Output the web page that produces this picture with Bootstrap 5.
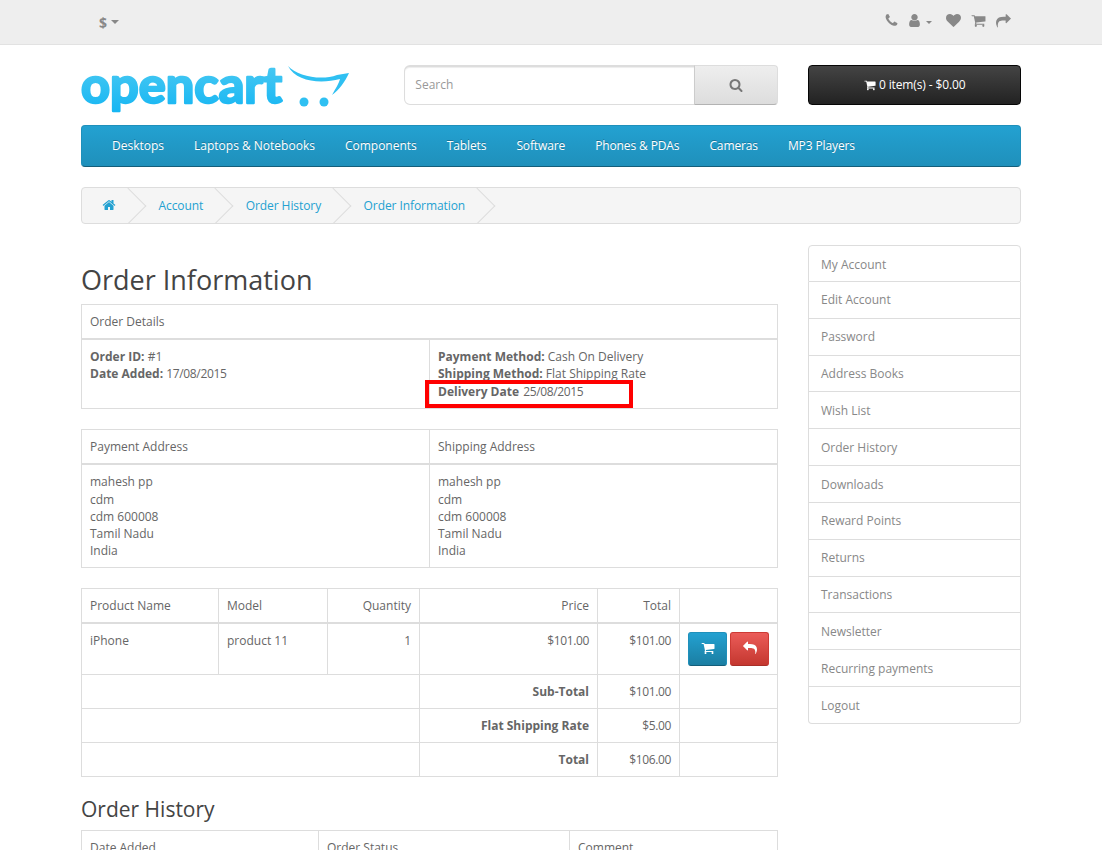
<!DOCTYPE html>
<html lang="en">
<head>
  <meta charset="UTF-8">
  <meta name="viewport" content="width=device-width, initial-scale=1">
  <title>Order Information</title>
  <link href="https://cdn.jsdelivr.net/npm/bootstrap@5.3.3/dist/css/bootstrap.min.css" rel="stylesheet">
  <style>
    html { overflow: hidden; }
    body {
      font-family: "Open Sans", "Liberation Sans", sans-serif;
      font-size: 12px;
      line-height: 1.42857;
      color: #666;
      background: #fff;
    }
    a { color: #23a1d1; text-decoration: none; }
    .container { max-width: 970px; --bs-gutter-x: 30px; }
    .row { --bs-gutter-x: 30px; --bs-gutter-y: 0; }
    .col-9.main-col { width: 727px; }
    .col-3.side-col { width: 243px; }
    .ico { width: 1em; height: 1em; fill: currentColor; display: inline-block; vertical-align: -0.125em; }
    .nums { letter-spacing: -.35px; }

    .top-strip {
      height: 45px;
      background: #eee;
      border-bottom: 1px solid #e2e2e2;
      margin-bottom: 20px;
      color: #888;
    }
    .currency { font-size: 14px; font-weight: 700; color: #888; margin: 13px 0 0 18px; line-height: 20px; }
    .top-links { gap: 10px; font-size: 15px; color: #888; margin: 10px 10px 0 0; line-height: 20px; }
    .top-links .dropdown-toggle { color: #888; margin: 0 4px 0 -2px; }
    .top-links .dropdown-toggle::after { border-top-width: 3px; border-left-width: 3px; border-right-width: 3px; margin-left: 4px; vertical-align: 2px; }

    .logo-svg { display: block; width: 270px; height: 50px; margin-top: 1px; }
    .search-box { height: 40px; }
    .search-box .form-control {
      height: 40px;
      font-size: 12px;
      color: #666;
      border: 1px solid #ddd;
      border-top-width: 2px;
      border-radius: 6px 0 0 6px;
      box-shadow: inset 0 1px 1px rgba(0, 0, 0, .075);
      padding: 8px 10px 11px;
    }
    .search-box .form-control::placeholder { color: #999; }
    .search-btn {
      width: 84px;
      height: 40px;
      padding: 0;
      font-size: 14px;
      color: #777;
      background: linear-gradient(to bottom, #eee, #ddd);
      border: 1px solid #ddd;
      border-bottom-color: #b3b3b3;
      border-left-color: #ccc;
      border-radius: 0 4px 4px 0;
    }
    .cart-btn {
      height: 40px;
      padding: 0;
      font-size: 12px;
      letter-spacing: -.12px;
      color: #fff;
      background: linear-gradient(to bottom, #444, #222);
      border: 1px solid #060606;
      border-radius: 4px;
    }

    .main-menu {
      background: linear-gradient(to bottom, #23a1d1, #1f90bb);
      border: 1px solid #1f90bb;
      border-bottom-color: #145e7a;
      border-radius: 4px;
      min-height: 42px;
      margin: 9px 0 20px;
      padding: 0 15px;
    }
    .main-menu .nav-link {
      color: #fff;
      font-size: 12px;
      padding: 10px 15px;
      text-shadow: 0 -1px 0 rgba(0, 0, 0, .25);
      line-height: 19px;
    }
    .main-menu .nav-item:nth-child(n+4) .nav-link { letter-spacing: -.12px; }

    .breadcrumb {
      background: #f5f5f5;
      border: 1px solid #ddd;
      border-radius: 4px;
      padding: 8px 0;
      margin: 0 0 21px;
      gap: 2.5px;
      overflow: hidden;
      height: 37px;
    }
    .breadcrumb-item { position: relative; padding: 0 20px; line-height: 20px; letter-spacing: -.08px; }
    .breadcrumb-item + .breadcrumb-item { padding-left: 20px; }
    .breadcrumb-item + .breadcrumb-item::before { display: none; }
    .breadcrumb-item::after {
      content: "";
      position: absolute;
      top: -3px;
      right: -5px;
      width: 26px;
      height: 26px;
      border-right: 1px solid #ddd;
      border-bottom: 1px solid #ddd;
      transform: rotate(-45deg);
    }
    .breadcrumb-item a { position: relative; z-index: 1; }
    .breadcrumb-item .ico { font-size: 14px; }

    h1.page-title { font-size: 27px; line-height: 1.1; font-weight: 400; color: #444; margin: 20px 0 9px; }
    h3.sub-title { font-size: 21px; line-height: 1.1; font-weight: 400; color: #444; margin: 21px 0 9px; }

    .oc-table {
      --bs-table-color: #666;
      --bs-table-border-color: #ddd;
      --bs-table-bg: transparent;
      table-layout: fixed;
      margin-bottom: 20px;
      font-size: 12px;
      color: #666;
    }
    .oc-table > :not(caption) > * > * { padding: 8px; line-height: 1.42857; vertical-align: top; box-shadow: none; color: #666; }
    .oc-table > thead > tr > * { font-weight: 400; border-bottom-width: 2px; border-bottom-color: #ddd; }
    .oc-table > :not(:first-child) { border-top: 0; }
    .oc-table > tbody > tr.detail-row > td { line-height: 17.5px; }
    .oc-table > tbody > tr.sum-row > td { line-height: 17px; }
    .cell-rel { position: relative; }
    .mark-box {
      position: absolute;
      left: -5px;
      top: 40px;
      width: 208px;
      height: 28px;
      border: 4px solid #f00;
      pointer-events: none;
    }
    .date-val { margin-left: 1px; }
    .w-name { width: 137px; }
    .w-model { width: 109px; }
    .w-qty { width: 92px; }
    .w-price { width: 178px; }
    .w-total { width: 82px; }
    .h-date { width: 237px; }
    .h-status { width: 251px; }

    .act-btn {
      width: 39px;
      height: 34px;
      padding: 0;
      font-size: 12px;
      color: #fff;
      border-radius: 3px;
      text-shadow: 0 -1px 0 rgba(0, 0, 0, .25);
    }
    .act-blue { background: linear-gradient(to bottom, #23a1d1, #1b7ea2); border: 1px solid #1f90bb; border-bottom-color: #145e7a; }
    .act-red { background: linear-gradient(to bottom, #eb5c59, #c4372f); border: 1px solid #cd3a35; border-bottom-color: #a82f28; margin-left: 3px; }
    .act-btn .ico { font-size: 14px; }

    .side-list { --bs-list-group-border-color: #ddd; --bs-list-group-border-radius: 4px; }
    .side-list .list-group-item { color: #888; font-size: 12px; padding: 9.5px 12px; line-height: 1.42857; border-color: #ddd; height: 36.85px; }
    .side-list .list-group-item + .list-group-item { border-top-width: 0; }
  </style>
</head>
<body>

  <svg width="0" height="0" class="position-absolute">
    <symbol id="i-phone" viewBox="0 0 1792 1792"><path d="M1600 1240q0 27-10 70.500t-21 68.500q-21 50-122 106-94 51-186 51-27 0-53-3.500t-57.500-12.500-47-14.500-55.500-20.500-49-18q-98-35-175-83-127-79-264-216t-216-264q-48-77-83-175-3-9-18-49t-20.500-55.500-14.500-47-12.500-57.500-3.500-53q0-92 51-186 56-101 106-122 25-11 68.500-21t70.500-10q14 0 21 3 18 6 53 76 11 19 30 54t35 63.500 31 53.500q3 4 17.500 25t21.500 35.500 7 28.500q0 20-28.500 50t-62 55-62 53-28.500 46q0 9 5 22.500t8.500 20.500 14 24 11.500 19q76 137 174 235t235 174q2 1 19 11.500t24 14 20.500 8.500 22.500 5q18 0 46-28.500t53-62 55-62 50-28.500q14 0 28.500 7t35.500 21.500 25 17.500q25 15 53.500 31t63.500 35 54 30q70 35 76 53 3 7 3 21z"/></symbol>
    <symbol id="i-user" viewBox="0 0 1792 1792"><path d="M1536 1399q0 109-62.500 187t-150.500 78h-854q-88 0-150.500-78t-62.500-187q0-85 8.500-160.500t31.500-152 58.500-131 94-89 134.500-34.500q131 128 313 128t313-128q76 0 134.500 34.500t94 89 58.500 131 31.500 152 8.500 160.500zm-256-887q0 159-112.500 271.500t-271.500 112.500-271.500-112.500-112.500-271.500 112.500-271.500 271.500-112.500 271.500 112.500 112.500 271.500z"/></symbol>
    <symbol id="i-heart" viewBox="0 0 1792 1792"><path d="M896 1664q-26 0-44-18l-624-602q-10-8-27.500-26t-55.500-65.500-68-97.500-53.500-121-23.500-138q0-220 127-344t351-124q62 0 126.500 21.500t120 58 95.500 68.500 76 68q36-36 76-68t95.500-68.500 120-58 126.500-21.500q224 0 351 124t127 344q0 221-229 450l-623 600q-18 18-44 18z"/></symbol>
    <symbol id="i-cart" viewBox="0 0 1792 1792"><path d="M704 1536q0 52-38 90t-90 38-90-38-38-90 38-90 90-38 90 38 38 90zm896 0q0 52-38 90t-90 38-90-38-38-90 38-90 90-38 90 38 38 90zm128-1088v512q0 24-16.500 42.500t-40.500 21.500l-1044 122q13 60 13 70 0 16-24 64h920q26 0 45 19t19 45-19 45-45 19h-1024q-26 0-45-19t-19-45q0-11 8-31.500t16-36 21.500-40 15.500-29.500l-177-823h-204q-26 0-45-19t-19-45 19-45 45-19h256q16 0 28.500 6.500t19.500 15.500 13 24.500 8 26 5.500 29.500 4.500 26h1201q26 0 45 19t19 45z"/></symbol>
    <symbol id="i-share" viewBox="0 0 1792 1792"><path d="M1792 640q0 26-19 45l-512 512q-19 19-45 19t-45-19-19-45v-256h-224q-98 0-175.500 6t-154 21.500-133 42.500-105.500 69.500-79.500 112.500-48 162-17 219q0 49 5 109 1 12 4 27.500t3 22q0 17-10 29t-28 12q-19 0-33-20-8-10-15-24t-16-32.500-12-26.500q-110-247-110-419 0-200 53-345 162-403 875-403h224v-256q0-26 19-45t45-19 45 19l512 512q19 19 19 45z"/></symbol>
    <symbol id="i-reply" viewBox="0 0 1792 1792"><path d="M1792 1120q0 166-127 451-3 7-10.500 24t-13.500 30-13 22q-12 17-28 17-15 0-23.500-10t-8.500-25q0-9 2.500-26.500t2.500-23.500q5-68 5-123 0-101-17.500-181t-48.500-138.500-80-101-105.500-69.500-133-42.500-154-21.500-175.500-6h-224v256q0 26-19 45t-45 19-45-19l-512-512q-19-19-19-45t19-45l512-512q19-19 45-19t45 19 19 45v256h224q713 0 875 403 53 134 53 333z"/></symbol>
    <symbol id="i-search" viewBox="0 0 1792 1792"><path d="M1216 832q0-185-131.500-316.500t-316.500-131.500-316.500 131.500-131.500 316.500 131.500 316.500 316.500 131.500 316.500-131.500 131.500-316.500zm512 832q0 52-38 90t-90 38q-54 0-90-38l-343-342q-179 124-399 124-143 0-273.500-55.500t-225-150-150-225-55.500-273.500 55.500-273.500 150-225 225-150 273.500-55.500 273.500 55.500 225 150 150 225 55.500 273.500q0 220-124 399l343 343q37 37 37 90z"/></symbol>
    <symbol id="i-home" viewBox="0 0 1792 1792"><path d="M1472 992v480q0 26-19 45t-45 19h-384v-384h-256v384h-384q-26 0-45-19t-19-45v-480q0-1 .5-3t.5-3l575-474 575 474q1 2 1 6zm223-69l-62 74q-8 9-21 11h-3q-13 0-21-7l-692-577-692 577q-12 8-24 7-13-2-21-11l-62-74q-8-10-7-23.500t11-21.500l719-599q32-26 76-26t76 26l244 204v-195q0-14 9-23t23-9h192q14 0 23 9t9 23v408l219 182q10 8 11 21.500t-7 23.500z"/></symbol>
  </svg>

  <nav class="top-strip">
    <div class="container d-flex justify-content-between align-items-start">
      <div class="currency dropdown-toggle">$</div>
      <div class="top-links d-flex align-items-center">
        <svg class="ico"><use href="#i-phone"/></svg>
        <span class="dropdown-toggle"><svg class="ico"><use href="#i-user"/></svg></span>
        <svg class="ico"><use href="#i-heart"/></svg>
        <svg class="ico"><use href="#i-cart"/></svg>
        <svg class="ico"><use href="#i-share"/></svg>
      </div>
    </div>
  </nav>

  <div class="container">
    <header class="row">
      <div class="col-4">
        <svg class="logo-svg" viewBox="0 0 270 50">
          <defs>
            <linearGradient id="logoFill" x1="0" y1="0" x2="0" y2="1">
              <stop offset="0" stop-color="#55cdf2"/>
              <stop offset="1" stop-color="#13b5f3"/>
            </linearGradient>
          </defs>
          <text x="0" y="37" font-family="Lato, 'Open Sans', sans-serif" font-weight="700" font-size="50" textLength="201" lengthAdjust="spacingAndGlyphs" fill="url(#logoFill)" stroke="url(#logoFill)" stroke-width="2.4" stroke-linejoin="round">opencart</text>
          <path d="M207 0C216 10 240 15 256 9L268 7C264 16 258 24 251 29C255 22 258 17 259 13C240 18 215 16 207 0Z" fill="#2fc0f2"/>
          <circle cx="223" cy="36" r="4.500" fill="#2fc0f2"/>
          <circle cx="243" cy="36" r="4.500" fill="#2fc0f2"/>
        </svg>
      </div>
      <div class="col-5">
        <div class="input-group search-box">
          <input type="text" class="form-control" placeholder="Search">
          <button class="btn search-btn" type="button"><svg class="ico"><use href="#i-search"/></svg></button>
        </div>
      </div>
      <div class="col-3">
        <button class="btn cart-btn w-100" type="button"><svg class="ico"><use href="#i-cart"/></svg> 0 item(s) - $0.00</button>
      </div>
    </header>

    <ul class="nav main-menu">
      <li class="nav-item"><a class="nav-link" href="#">Desktops</a></li>
      <li class="nav-item"><a class="nav-link" href="#">Laptops &amp; Notebooks</a></li>
      <li class="nav-item"><a class="nav-link" href="#">Components</a></li>
      <li class="nav-item"><a class="nav-link" href="#">Tablets</a></li>
      <li class="nav-item"><a class="nav-link" href="#">Software</a></li>
      <li class="nav-item"><a class="nav-link" href="#">Phones &amp; PDAs</a></li>
      <li class="nav-item"><a class="nav-link" href="#">Cameras</a></li>
      <li class="nav-item"><a class="nav-link" href="#">MP3 Players</a></li>
    </ul>

    <ol class="breadcrumb">
      <li class="breadcrumb-item"><a href="#"><svg class="ico"><use href="#i-home"/></svg></a></li>
      <li class="breadcrumb-item"><a href="#">Account</a></li>
      <li class="breadcrumb-item"><a href="#">Order History</a></li>
      <li class="breadcrumb-item"><a href="#">Order Information</a></li>
    </ol>

    <div class="row">
      <div class="col-9 main-col">
        <h1 class="page-title">Order Information</h1>

        <table class="table table-bordered oc-table">
          <thead>
            <tr><td colspan="2">Order Details</td></tr>
          </thead>
          <tbody>
            <tr class="detail-row">
              <td>
                <b>Order ID:</b> #1<br>
                <b>Date Added:</b> <span class="nums">17/08/2015</span>
              </td>
              <td class="cell-rel">
                <b>Payment Method:</b> Cash On Delivery<br>
                <b>Shipping Method:</b> Flat Shipping Rate<br>
                <b>Delivery Date</b> <span class="nums date-val">25/08/2015</span>
                <div class="mark-box"></div>
              </td>
            </tr>
          </tbody>
        </table>

        <table class="table table-bordered oc-table">
          <thead>
            <tr><td>Payment Address</td><td>Shipping Address</td></tr>
          </thead>
          <tbody>
            <tr>
              <td>mahesh pp<br>cdm<br>cdm 600008<br>Tamil Nadu<br>India</td>
              <td>mahesh pp<br>cdm<br>cdm 600008<br>Tamil Nadu<br>India</td>
            </tr>
          </tbody>
        </table>

        <table class="table table-bordered oc-table">
          <thead>
            <tr>
              <td class="w-name">Product Name</td>
              <td class="w-model">Model</td>
              <td class="w-qty text-end">Quantity</td>
              <td class="w-price text-end">Price</td>
              <td class="w-total text-end">Total</td>
              <td></td>
            </tr>
          </thead>
          <tbody>
            <tr>
              <td>iPhone</td>
              <td>product 11</td>
              <td class="text-end">1</td>
              <td class="text-end"><span class="nums">$101.00</span></td>
              <td class="text-end"><span class="nums">$101.00</span></td>
              <td class="text-nowrap">
                <button class="btn act-btn act-blue" type="button"><svg class="ico"><use href="#i-cart"/></svg></button><button class="btn act-btn act-red" type="button"><svg class="ico"><use href="#i-reply"/></svg></button>
              </td>
            </tr>
            <tr class="sum-row"><td colspan="3"></td><td class="text-end"><b>Sub-Total</b></td><td class="text-end"><span class="nums">$101.00</span></td><td></td></tr>
            <tr class="sum-row"><td colspan="3"></td><td class="text-end"><b>Flat Shipping Rate</b></td><td class="text-end"><span class="nums">$5.00</span></td><td></td></tr>
            <tr class="sum-row"><td colspan="3"></td><td class="text-end"><b>Total</b></td><td class="text-end"><span class="nums">$106.00</span></td><td></td></tr>
          </tbody>
        </table>

        <h3 class="sub-title">Order History</h3>
        <table class="table table-bordered oc-table">
          <thead>
            <tr><td class="h-date">Date Added</td><td class="h-status">Order Status</td><td>Comment</td></tr>
          </thead>
        </table>
      </div>

      <div class="col-3 side-col">
        <div class="list-group side-list">
          <a href="#" class="list-group-item">My Account</a>
          <a href="#" class="list-group-item">Edit Account</a>
          <a href="#" class="list-group-item">Password</a>
          <a href="#" class="list-group-item">Address Books</a>
          <a href="#" class="list-group-item">Wish List</a>
          <a href="#" class="list-group-item">Order History</a>
          <a href="#" class="list-group-item">Downloads</a>
          <a href="#" class="list-group-item">Reward Points</a>
          <a href="#" class="list-group-item">Returns</a>
          <a href="#" class="list-group-item">Transactions</a>
          <a href="#" class="list-group-item">Newsletter</a>
          <a href="#" class="list-group-item">Recurring payments</a>
          <a href="#" class="list-group-item">Logout</a>
        </div>
      </div>
    </div>
  </div>

  <script src="https://cdn.jsdelivr.net/npm/bootstrap@5.3.3/dist/js/bootstrap.bundle.min.js"></script>
</body>
</html>
